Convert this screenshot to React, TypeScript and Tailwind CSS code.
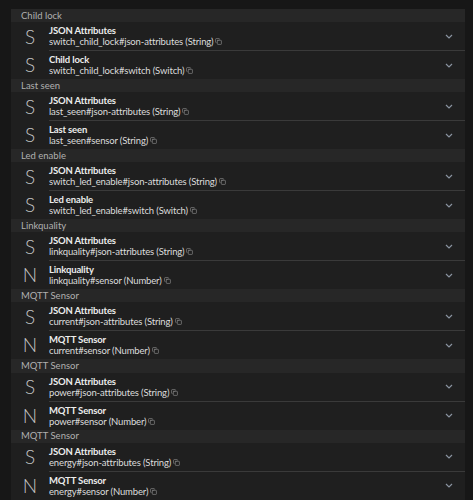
import { Copy } from "lucide-react";

type Entity = {
  icon: "S" | "N";
  title: string;
  id: string;
};

type Section = {
  name: string;
  items: Entity[];
};

const sections: Section[] = [
  {
    name: "Child lock",
    items: [
      { icon: "S", title: "JSON Attributes", id: "switch_child_lock#json-attributes (String)" },
      { icon: "S", title: "Child lock", id: "switch_child_lock#switch (Switch)" },
    ],
  },
  {
    name: "Last seen",
    items: [
      { icon: "S", title: "JSON Attributes", id: "last_seen#json-attributes (String)" },
      { icon: "S", title: "Last seen", id: "last_seen#sensor (String)" },
    ],
  },
  {
    name: "Led enable",
    items: [
      { icon: "S", title: "JSON Attributes", id: "switch_led_enable#json-attributes (String)" },
      { icon: "S", title: "Led enable", id: "switch_led_enable#switch (Switch)" },
    ],
  },
  {
    name: "Linkquality",
    items: [
      { icon: "S", title: "JSON Attributes", id: "linkquality#json-attributes (String)" },
      { icon: "N", title: "Linkquality", id: "linkquality#sensor (Number)" },
    ],
  },
  {
    name: "MQTT Sensor",
    items: [
      { icon: "S", title: "JSON Attributes", id: "current#json-attributes (String)" },
      { icon: "N", title: "MQTT Sensor", id: "current#sensor (Number)" },
    ],
  },
  {
    name: "MQTT Sensor",
    items: [
      { icon: "S", title: "JSON Attributes", id: "power#json-attributes (String)" },
      { icon: "N", title: "MQTT Sensor", id: "power#sensor (Number)" },
    ],
  },
  {
    name: "MQTT Sensor",
    items: [
      { icon: "S", title: "JSON Attributes", id: "energy#json-attributes (String)" },
      { icon: "N", title: "MQTT Sensor", id: "energy#sensor (Number)" },
    ],
  },
];

function Chevron() {
  return (
    <svg width="8" height="5" viewBox="0 0 8 5" className="shrink-0">
      <path d="M1 1 L4 4 L7 1" fill="none" stroke="#8a93a0" strokeWidth="1.2" />
    </svg>
  );
}

function EntityRow({ item, first }: { item: Entity; first: boolean }) {
  return (
    <div className={`flex items-center bg-[#1f1f1f] ${first ? "h-[28px]" : "h-[29px]"}`}>
      <div className="w-[38px] shrink-0 text-center text-[19px] font-light leading-none text-[#c4c4c4]">
        {item.icon}
      </div>
      <div
        className={`flex h-full flex-1 items-center pr-[12px] ${
          first ? "" : "border-t border-[#3a3a3a]"
        }`}
      >
        <div className="flex flex-1 flex-col leading-[11px] tracking-[-0.15px]">
          <span className="text-[9.5px] font-bold text-[#ececec]">{item.title}</span>
          <span className="flex items-center gap-[2px] text-[9.5px] text-[#dcdcdc]">
            {item.id}
            <Copy size={7} strokeWidth={2} className="text-[#9a9a9a]" />
          </span>
        </div>
        <Chevron />
      </div>
    </div>
  );
}

export default function App() {
  return (
    <div
      className="min-h-[500px] w-[473px] bg-[#171717] pt-[9px] pl-[11px] pr-[8px]"
      style={{ fontFamily: "Lato, 'Open Sans', sans-serif" }}
    >
      <div className="flex flex-col">
        {sections.map((section, i) => (
          <div key={i} className="flex flex-col">
            <div className="flex h-[13.1px] items-center bg-[#272727] pl-[10px] text-[9.5px] leading-none text-[#b0b0b0]">
              {section.name}
            </div>
            {section.items.map((item, j) => (
              <EntityRow key={j} item={item} first={j === 0} />
            ))}
          </div>
        ))}
      </div>
    </div>
  );
}
